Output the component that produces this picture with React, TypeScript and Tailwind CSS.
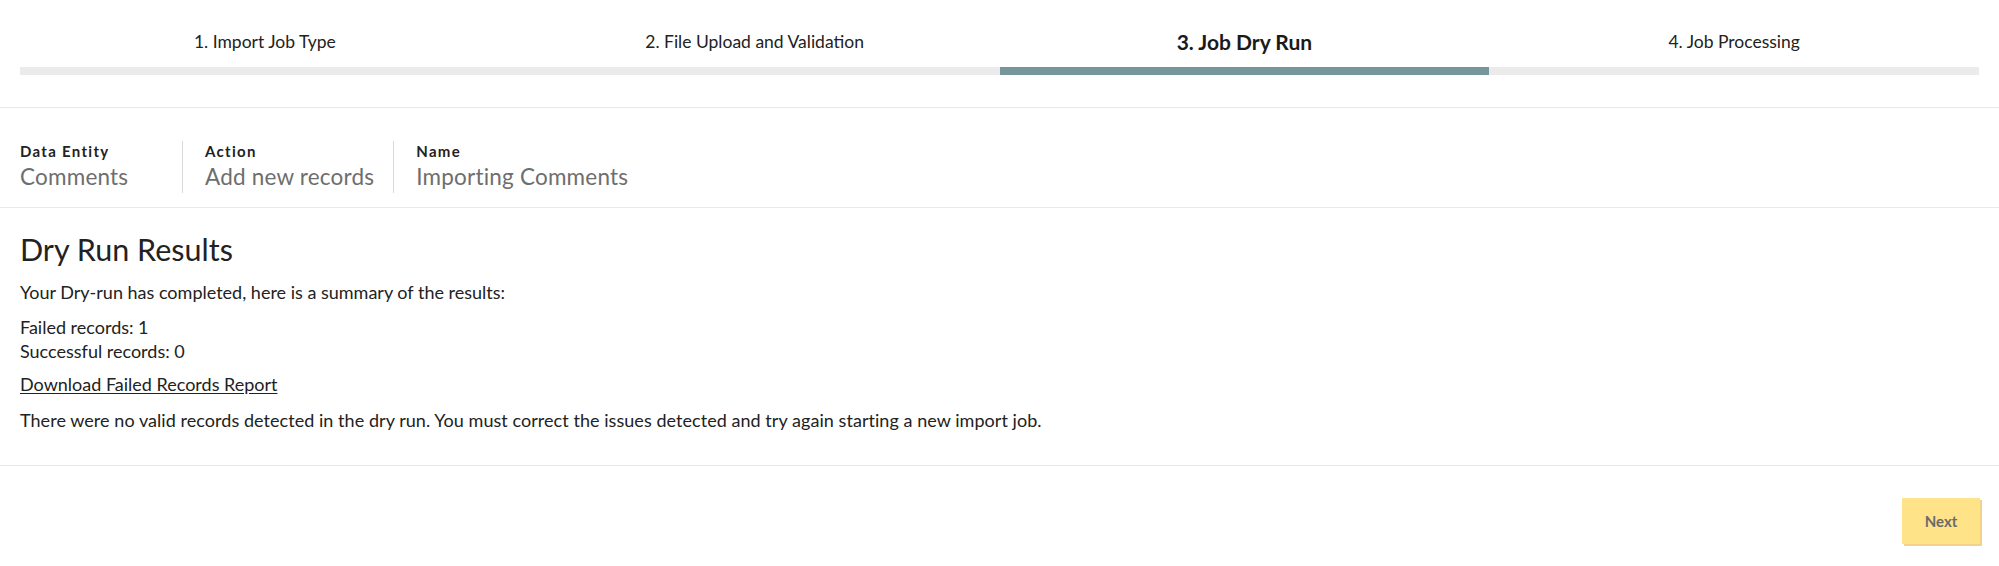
const steps = [
    { label: "1. Import Job Type", active: false },
    { label: "2. File Upload and Validation", active: false },
    { label: "3. Job Dry Run", active: true },
    { label: "4. Job Processing", active: false },
];

const details = [
    { label: "Data Entity", value: "Comments" },
    { label: "Action", value: "Add new records" },
    { label: "Name", value: "Importing Comments" },
];

const App = () => {
    return (
        <div className="min-h-screen w-full bg-white font-['Lato',sans-serif] text-[#222]">
            {/* Wizard steps */}
            <div className="grid grid-cols-4 border-b border-[#e8e8e8] px-5 pt-[30px] pb-[32px]">
                {steps.map((step) => (
                    <div key={step.label} className="flex flex-col">
                        <div
                            className={
                                step.active
                                    ? "mb-[13px] h-6 text-center text-[21px] leading-6 font-bold text-[#1a1a1a]"
                                    : "mb-[13px] h-6 text-center text-[17.5px] leading-6 text-[#222]"
                            }
                        >
                            {step.label}
                        </div>
                        <div
                            className={
                                step.active ? "h-2 bg-[#77969b]" : "h-2 bg-[#ebebeb]"
                            }
                        />
                    </div>
                ))}
            </div>

            {/* Job details */}
            <div className="flex border-b border-[#e8e8e8] px-5 pt-[33px] pb-[14px]">
                {details.map((item, i) => (
                    <div
                        key={item.label}
                        className={
                            i === 0
                                ? "w-[162px] pr-5"
                                : "border-l border-[#d9d9d9] pr-[19px] pl-[22px]"
                        }
                    >
                        <div className="text-[15px] leading-[20px] font-bold tracking-[1.3px] text-[#222]">
                            {item.label}
                        </div>
                        <div className="text-[22.5px] leading-[32px] tracking-[0.2px] text-[#6e6e6e]">
                            {item.value}
                        </div>
                    </div>
                ))}
            </div>

            {/* Results */}
            <div className="border-b border-[#e8e8e8] px-5 pt-[24px] pb-[33px] text-[18px] leading-6">
                <h2 className="text-[30.5px] leading-[34px] font-normal text-[#222]">
                    Dry Run Results
                </h2>
                <p className="mt-[14px]">
                    Your Dry-run has completed, here is a summary of the results:
                </p>
                <div className="mt-[11px]">
                    <p>Failed records: 1</p>
                    <p>Successful records: 0</p>
                </div>
                <a href="#" className="mt-[9px] block w-fit underline underline-offset-2">
                    Download Failed Records Report
                </a>
                <p className="mt-[12px] tracking-[0.05px]">
                    There were no valid records detected in the dry run. You must correct the
                    issues detected and try again starting a new import job.
                </p>
            </div>

            {/* Footer */}
            <div className="flex justify-end px-[19px] pt-8">
                <button
                    disabled
                    className="h-[46px] w-[78px] bg-[#fee388] text-[15px] font-bold text-[#6a6a6a] shadow-[2px_2px_0_#f2d18a]"
                >
                    Next
                </button>
            </div>
        </div>
    );
};

export default App;
